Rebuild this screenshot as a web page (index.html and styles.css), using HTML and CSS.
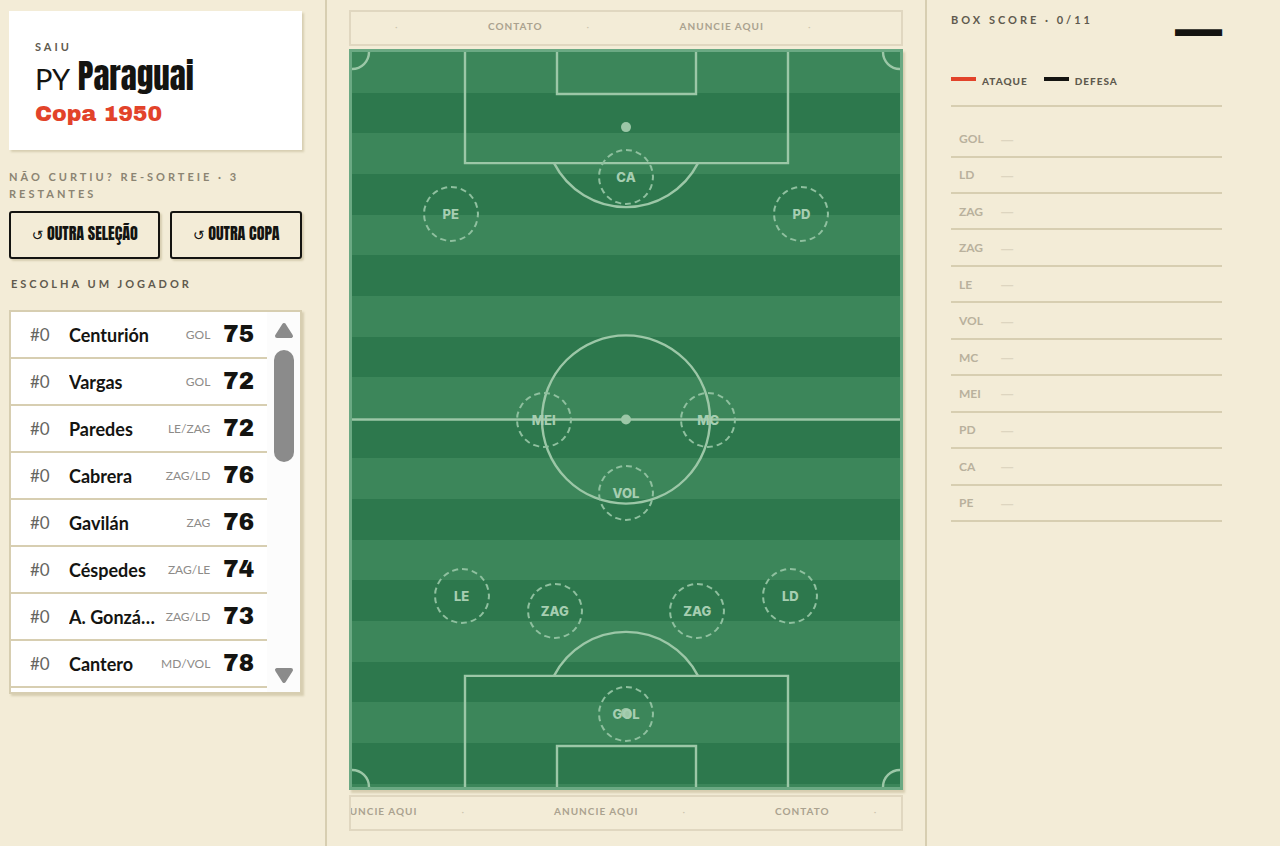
FILE: index.html
```
<!DOCTYPE html>
<html lang="pt-BR">
<head>
    <meta charset="UTF-8">
    <meta name="viewport" content="width=device-width, initial-scale=1.0">
    <title>Paraguai - Copa 1950</title>
    <link rel="stylesheet" href="styles.css">
</head>
<body>
    <div class="game">
        <aside class="draft">
            <section class="team-card">
                <p class="label">SAIU</p>
                <h1><span class="flag">PY</span> Paraguai</h1>
                <p class="cup">Copa 1950</p>
            </section>

            <p class="label reroll-label">NÃO CURTIU? RE-SORTEIE · 3 RESTANTES</p>
            <div class="reroll">
                <button type="button"><span class="arrow">↺</span> OUTRA SELEÇÃO</button>
                <button type="button"><span class="arrow">↺</span> OUTRA COPA</button>
            </div>

            <h2 class="label pick-label">ESCOLHA UM JOGADOR</h2>
            <div class="players">
                <ul>
                    <li><button type="button"><span class="num">#0</span><span class="name">Centurión</span><span class="pos">GOL</span><span class="rating">75</span></button></li>
                    <li><button type="button"><span class="num">#0</span><span class="name">Vargas</span><span class="pos">GOL</span><span class="rating">72</span></button></li>
                    <li><button type="button"><span class="num">#0</span><span class="name">Paredes</span><span class="pos">LE/ZAG</span><span class="rating">72</span></button></li>
                    <li><button type="button"><span class="num">#0</span><span class="name">Cabrera</span><span class="pos">ZAG/LD</span><span class="rating">76</span></button></li>
                    <li><button type="button"><span class="num">#0</span><span class="name">Gavilán</span><span class="pos">ZAG</span><span class="rating">76</span></button></li>
                    <li><button type="button"><span class="num">#0</span><span class="name">Céspedes</span><span class="pos">ZAG/LE</span><span class="rating">74</span></button></li>
                    <li><button type="button"><span class="num">#0</span><span class="name">A. González</span><span class="pos">ZAG/LD</span><span class="rating">73</span></button></li>
                    <li><button type="button"><span class="num">#0</span><span class="name">Cantero</span><span class="pos">MD/VOL</span><span class="rating">78</span></button></li>
                </ul>
                <div class="scrollbar" aria-hidden="true">
                    <svg width="20" height="16" viewBox="0 0 20 16"><path d="M10 3 L17 14 H3 Z"/></svg>
                    <div class="track"><div class="thumb"></div></div>
                    <svg width="20" height="16" viewBox="0 0 20 16"><path d="M3 2 H17 L10 13 Z"/></svg>
                </div>
            </div>
        </aside>

        <main class="field">
            <div class="ticker">
                <div class="ticker-track">
                    <i>·</i><a href="#contato">CONTATO</a><i>·</i><a href="#anuncie">ANUNCIE AQUI</a><i>·</i>
                </div>
            </div>

            <div class="pitch">
                <svg class="lines" viewBox="0 0 548 734" preserveAspectRatio="none">
                    <path d="M0 367 H548"/>
                    <circle cx="274" cy="367" r="84"/>
                    <path d="M113 0 V111 H436 V0 M205 0 V42 H344 V0"/>
                    <path d="M113 734 V623 H436 V734 M205 734 V693 H344 V734"/>
                    <path d="M202 111 A81 81 0 0 0 346 111"/>
                    <path d="M202 623 A81 81 0 0 1 346 623"/>
                    <path d="M17 0 A17 17 0 0 1 0 17 M531 0 A17 17 0 0 0 548 17"/>
                    <path d="M0 717 A17 17 0 0 1 17 734 M548 717 A17 17 0 0 0 531 734"/>
                    <circle class="dot" cx="274" cy="75" r="5"/>
                    <circle class="dot" cx="274" cy="367" r="5"/>
                    <circle class="dot" cx="274" cy="660" r="5"/>
                </svg>
                <button type="button" class="slot pe">PE</button>
                <button type="button" class="slot ca">CA</button>
                <button type="button" class="slot pd">PD</button>
                <button type="button" class="slot mei">MEI</button>
                <button type="button" class="slot mc">MC</button>
                <button type="button" class="slot vol">VOL</button>
                <button type="button" class="slot le">LE</button>
                <button type="button" class="slot zag-l">ZAG</button>
                <button type="button" class="slot zag-r">ZAG</button>
                <button type="button" class="slot ld">LD</button>
                <button type="button" class="slot gol">GOL</button>
            </div>

            <div class="ticker">
                <div class="ticker-track scrolled">
                    <a href="#anuncie">ANUNCIE AQUI</a><i>·</i><a href="#anuncie">ANUNCIE AQUI</a><i>·</i><a href="#contato">CONTATO</a><i>·</i>
                </div>
            </div>
        </main>

        <aside class="score">
            <div class="score-head">
                <h2 class="label">BOX SCORE · 0/11</h2>
                <span class="total">—</span>
            </div>
            <div class="legend">
                <span class="key attack">ATAQUE</span>
                <span class="key defense">DEFESA</span>
            </div>
            <table>
                <tbody>
                    <tr><th scope="row">GOL</th><td>—</td></tr>
                    <tr><th scope="row">LD</th><td>—</td></tr>
                    <tr><th scope="row">ZAG</th><td>—</td></tr>
                    <tr><th scope="row">ZAG</th><td>—</td></tr>
                    <tr><th scope="row">LE</th><td>—</td></tr>
                    <tr><th scope="row">VOL</th><td>—</td></tr>
                    <tr><th scope="row">MC</th><td>—</td></tr>
                    <tr><th scope="row">MEI</th><td>—</td></tr>
                    <tr><th scope="row">PD</th><td>—</td></tr>
                    <tr><th scope="row">CA</th><td>—</td></tr>
                    <tr><th scope="row">PE</th><td>—</td></tr>
                </tbody>
            </table>
        </aside>
    </div>
</body>
</html>
```
FILE: styles.css
```
:root {
    --paper: #f3ecd7;
    --line: #d7ceb1;
    --ink: #141411;
    --muted: #8b8472;
    --red: #e2432a;
    --chalk: #9cc7a7;
    --condensed: "Anton", "Liberation Sans Narrow", "Roboto Condensed", sans-serif;
    --black: "Archivo Black", Inter, sans-serif;
}

* {
    margin: 0;
    padding: 0;
    box-sizing: border-box;
}

body {
    background-color: var(--paper);
    color: var(--ink);
    font-family: Lato, sans-serif;
}

button {
    font: inherit;
    color: inherit;
    background: none;
    border: none;
    cursor: pointer;
}

.game {
    display: grid;
    grid-template-columns: 327px minmax(0, 1fr) 355px;
    min-height: 100vh;
}

.label {
    font-size: 11px;
    line-height: 17px;
    font-weight: 700;
    letter-spacing: 3px;
    color: #5f5a4e;
}

/* left column */
.draft {
    padding: 11px 23px 0 9px;
    border-right: 2px solid var(--line);
}

.team-card {
    background-color: #fff;
    padding: 27px 26px 20px;
    box-shadow: 2px 2px 2px var(--line);
}

.team-card h1 {
    font-family: var(--condensed);
    font-size: 33px;
    line-height: 43px;
    font-weight: 400;
}

.flag {
    font-family: Lato, sans-serif;
    font-size: 29px;
    line-height: 1;
}

.cup {
    font-family: var(--black);
    font-size: 22px;
    line-height: 32px;
    font-weight: 400;
    color: var(--red);
}

.reroll-label {
    margin-top: 18px;
    color: var(--muted);
}

.reroll {
    display: flex;
    gap: 10px;
    margin-top: 9px;
}

.reroll button {
    flex: 1 1 auto;
    height: 48px;
    padding-bottom: 4px;
    border: 2px solid var(--ink);
    border-radius: 3px;
    box-shadow: 2px 2px 2px var(--line);
    font-family: var(--condensed);
    font-size: 16px;
    white-space: nowrap;
}

.arrow {
    font-family: "DejaVu Sans", sans-serif;
    font-size: 14px;
    font-weight: 400;
}

.pick-label {
    margin: 16px 0 18px 2px;
}

.players {
    display: flex;
    height: 384px;
    background-color: #fff;
    border: 2px solid var(--line);
    box-shadow: 2px 2px 2px var(--line);
    overflow: hidden;
}

.players ul {
    flex: 1;
    min-width: 0;
    list-style: none;
}

.players li button {
    display: flex;
    align-items: center;
    width: 100%;
    height: 47px;
    padding: 0 13px 0 19px;
    border-bottom: 2px solid var(--line);
    text-align: left;
}

.num {
    width: 39px;
    font-size: 17px;
    color: #66655f;
}

.name {
    flex: 1;
    min-width: 0;
    overflow: hidden;
    text-overflow: ellipsis;
    white-space: nowrap;
    font-size: 18px;
    font-weight: 700;
}

.pos {
    margin: 0 13px 0 10px;
    font-size: 12px;
    color: #8d8b88;
}

.rating {
    font-family: var(--black);
    font-size: 23px;
    font-weight: 400;
}

.scrollbar {
    display: flex;
    flex-direction: column;
    align-items: center;
    width: 33px;
    padding: 10px 0 8px;
    background-color: #fcfcfc;
}

.scrollbar svg {
    fill: #8b8b8b;
    stroke: #8b8b8b;
    stroke-width: 4;
    stroke-linejoin: round;
}

.track {
    flex: 1;
    width: 20px;
    padding-top: 12px;
}

.thumb {
    height: 112px;
    border-radius: 10px;
    background-color: #8b8b8b;
}

/* pitch */
.field {
    padding: 10px 22px 15px;
}

.ticker {
    height: 36px;
    padding-bottom: 4px;
    border: 2px solid #e0d7c0;
    overflow: hidden;
}

.ticker-track {
    display: flex;
    align-items: center;
    height: 100%;
    white-space: nowrap;
}

.ticker-track.scrolled {
    margin-left: -18px;
}

.ticker a {
    font-size: 10px;
    font-weight: 700;
    letter-spacing: 1px;
    color: #aaa28f;
    text-decoration: none;
}

.ticker i {
    width: 3px;
    margin: 0 90px 0 44px;
    font-size: 10px;
    font-style: normal;
    color: #cdc4ae;
}

.pitch {
    position: relative;
    aspect-ratio: 554 / 741;
    margin: 3px 0 5px;
    border: 3px solid #6ba983;
    box-shadow: 2px 3px 2px var(--line);
    background: repeating-linear-gradient(#3c865a 0 5.53%, #2d784d 5.53% 11.06%);
}

.lines {
    display: block;
    width: 100%;
    height: 100%;
    fill: none;
    stroke: var(--chalk);
    stroke-width: 2.4;
}

.lines .dot {
    fill: var(--chalk);
    stroke: none;
}

.slot {
    position: absolute;
    width: 56px;
    height: 56px;
    border: 2px dashed #8fc09f;
    border-radius: 50%;
    transform: translate(-50%, -50%);
    font-family: Inter, sans-serif;
    font-size: 13px;
    font-weight: 800;
    color: #a6ceb1;
}

.pe { left: 18%; top: 22%; }
.pd { left: 82%; top: 22%; }
.ca { left: 50%; top: 17%; }
.mei { left: 35%; top: 50%; }
.mc { left: 65%; top: 50%; }
.vol { left: 50%; top: 60%; }
.le { left: 20%; top: 74%; }
.ld { left: 80%; top: 74%; }
.zag-l { left: 37%; top: 76%; }
.zag-r { left: 63%; top: 76%; }
.gol { left: 50%; top: 90%; }

/* right column */
.score {
    padding: 11px 58px 0 24px;
    border-left: 2px solid var(--line);
}

.score-head {
    display: flex;
    justify-content: space-between;
    height: 58px;
}

.total {
    font-family: var(--black);
    font-size: 47px;
    line-height: 38px;
    font-weight: 400;
}

.legend {
    display: flex;
    gap: 16px;
    padding-bottom: 12px;
    border-bottom: 2px solid var(--line);
}

.key {
    display: flex;
    align-items: center;
    gap: 6px;
    font-size: 10px;
    line-height: 24px;
    font-weight: 900;
    letter-spacing: 1px;
    color: #5f5a4e;
}

.key::before {
    content: "";
    width: 25px;
    height: 4px;
    margin-bottom: 4px;
    background-color: var(--ink);
}

.attack::before {
    background-color: var(--red);
}

.score table {
    width: 100%;
    height: 400px;
    margin-top: 15px;
    border-collapse: collapse;
}

.score tr {
    border-bottom: 2px solid var(--line);
}

.score th {
    width: 49px;
    padding-left: 8px;
    font-size: 12px;
    font-weight: 700;
    text-align: left;
    color: #b9b19d;
}

.score td {
    font-size: 18px;
    line-height: 18px;
    color: #ddd5c0;
}
```
